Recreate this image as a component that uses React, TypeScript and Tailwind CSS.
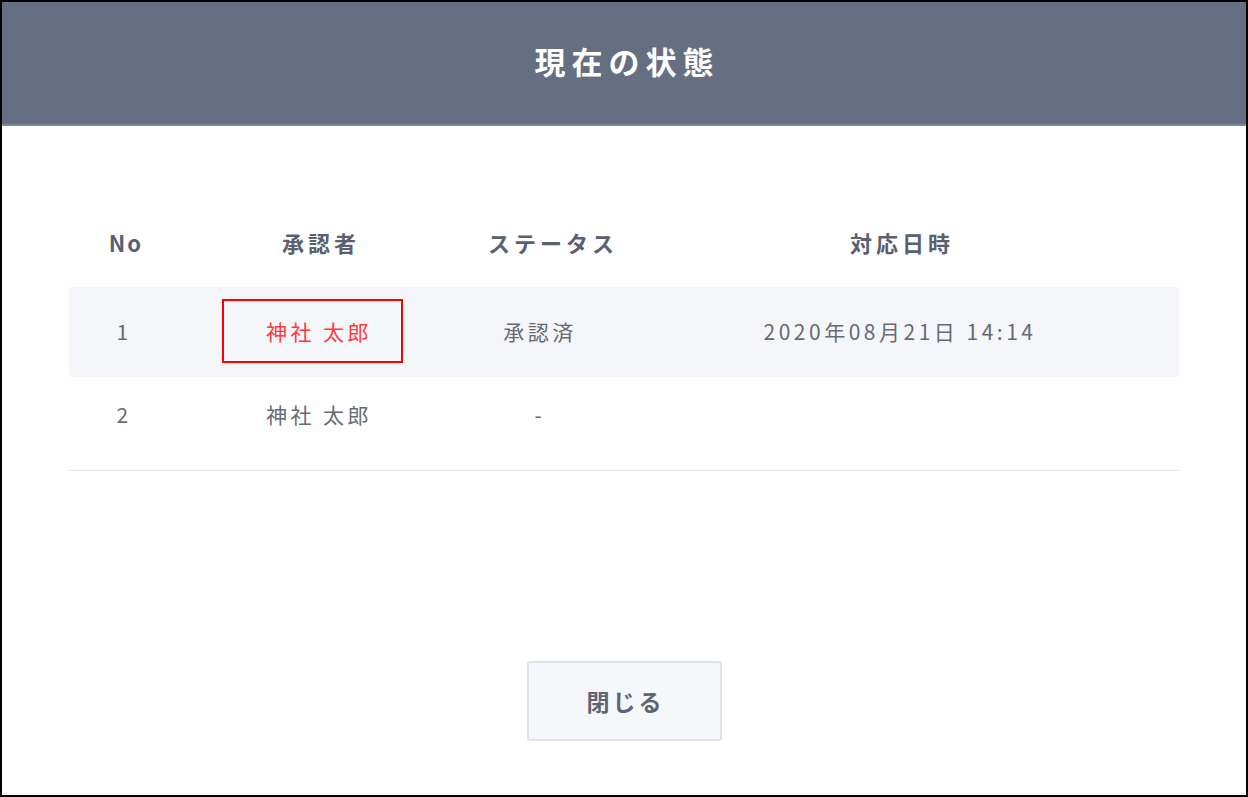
const font = { fontFamily: '"Noto Sans CJK JP", "Noto Sans", sans-serif' };

const rows = [
  { no: '1', name: '神社 太郎', status: '承認済', date: '2020年08月21日 14:14', marked: true },
  { no: '2', name: '神社 太郎', status: '-', date: '', marked: false },
];

export default function App() {
  return (
    <div className="w-[1248px] h-[797px] border-2 border-black bg-white flex flex-col" style={font}>
      {/* Header */}
      <header className="h-[124px] shrink-0 bg-[#656f81] border-b-2 border-[#7f889a] flex items-center justify-center pb-[6px]">
        <h1 className="text-[31px] font-bold text-white tracking-[6px] pl-[6px] leading-none">現在の状態</h1>
      </header>

      {/* Table */}
      <div className="mx-[67px] mt-[72px]">
        <div className="grid grid-cols-[110px_280px_162px_1fr] h-[89px] items-center text-center text-[22px] font-bold text-[#5a6070] tracking-[4px]">
          <div className="pl-[4px] tracking-[2px]">No</div>
          <div className="pl-[4px]">承認者</div>
          <div className="pl-[26px]">ステータス</div>
          <div className="pl-[4px]">対応日時</div>
        </div>

        {rows.map((r, i) => (
          <div
            key={r.no}
            className={
              i === 0
                ? 'grid grid-cols-[110px_280px_162px_1fr] h-[90px] items-center text-center text-[21px] text-[#666a73] tracking-[3.5px] bg-[#f5f6fa]'
                : 'grid grid-cols-[110px_280px_162px_1fr] h-[94px] pb-[18px] items-center text-center text-[21px] text-[#666a73] tracking-[3.5px] border-b border-[#e6e8ec]'
            }
          >
            <div>{r.no}</div>
            <div className="relative">
              <span className={r.marked ? 'text-[#ff3a3a]' : ''}>{r.name}</span>
              {r.marked && (
                <div className="absolute left-[43px] top-[-17px] w-[181px] h-[64px] border-2 border-[#ff0000]" />
              )}
            </div>
            <div>{r.status}</div>
            <div>{r.date}</div>
          </div>
        ))}
      </div>

      {/* Footer */}
      <div className="flex justify-center mt-[190px]">
        <button className="w-[195px] h-[80px] bg-[#f5f7fa] border-2 border-[#dde2ec] rounded-[3px] text-[23px] font-bold text-[#5d6577] tracking-[3px] pl-[3px]">
          閉じる
        </button>
      </div>
    </div>
  );
}
